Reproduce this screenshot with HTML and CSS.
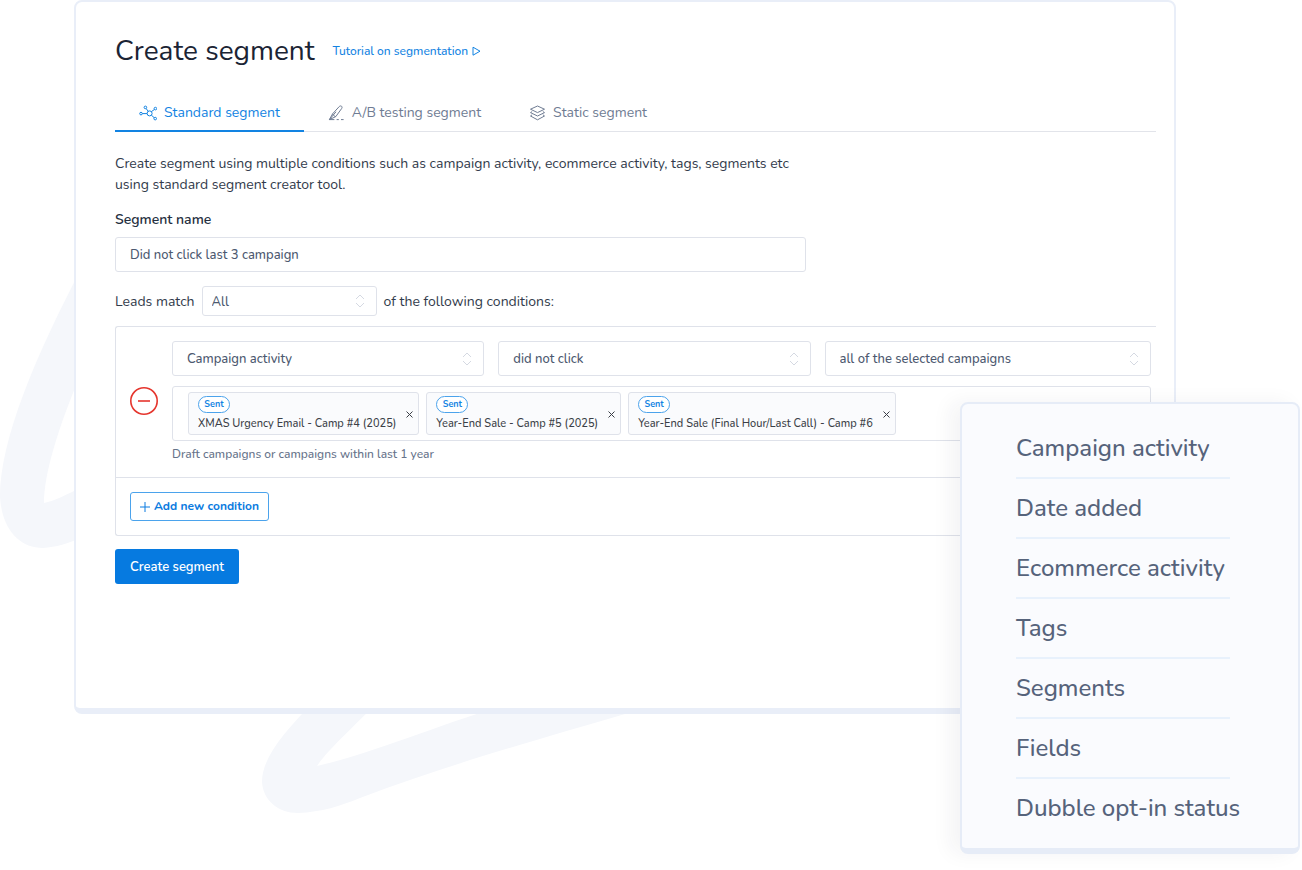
FILE: index.html
```html
<!DOCTYPE html>
<html lang="en">
  <head>
    <meta charset="UTF-8" />
    <meta name="viewport" content="width=device-width, initial-scale=1.0" />
    <title>Create segment</title>
    <link rel="stylesheet" href="styles.css" />
  </head>
  <body>
    <div class="stage">
      <!-- Background ribbon -->
      <svg class="ribbon" width="640" height="820" viewBox="0 0 640 820" aria-hidden="true">
        <path d="M82 267C35 357 0 440 0 497C2 530 20 548 43 548C56 547 68 544 82 537V487C68 494 54 501 44 503C44 475 57 430 82 371Z" />
        <path d="M312 703C285 732 262 757 262 782C263 800 278 813 298 813C322 812 340 806 360 798C450 764 530 742 655 705H505C430 728 370 754 317 766C328 750 347 733 375 705Z" />
      </svg>

      <main class="panel">
        <header class="title-row">
          <h1>Create segment</h1>
          <a href="#" class="tutorial">
            Tutorial on segmentation
            <svg width="9" height="10" viewBox="0 0 9 10"><path d="M1 1.2 8 5.2 1 9.2Z" /></svg>
          </a>
        </header>

        <nav class="tabs">
          <a href="#" class="tab active">
            <svg width="18" height="16" viewBox="0 0 18 16">
              <circle cx="10.6" cy="8.4" r="2.5" />
              <circle cx="6.4" cy="2.4" r="1.3" />
              <circle cx="16.4" cy="3.6" r="1.3" />
              <circle cx="2" cy="8.6" r="1.3" />
              <circle cx="16.2" cy="13.6" r="1.3" />
              <path d="M7.1 3.5 9.2 6.3M15.4 4.5 12.4 6.6M3.3 8.6H8.1M12.4 10.2 15.2 12.7" />
            </svg>
            Standard segment
          </a>
          <a href="#" class="tab">
            <svg width="17" height="16" viewBox="0 0 17 16">
              <path d="M4.6 8.8 11.2 1.6C11.9.8 13 .7 13.6 1.3 14.2 1.8 14.2 2.8 13.6 3.6L7.8 11.6 1.4 14.6ZM4.6 8.8C5.4 10.4 6.4 11.4 7.8 11.6M1.4 14.6 8 6.8M1.4 14.6H6.4M8.6 14.6H10.8M13 14.6H15.6" />
            </svg>
            A/B testing segment
          </a>
          <a href="#" class="tab">
            <svg width="17" height="16" viewBox="0 0 17 16">
              <path d="M8.5 1 15.5 4.2 8.5 7.6 1.5 4.2ZM3.1 6.6 1.5 7.6 8.5 11 15.5 7.6 13.9 6.6M3.1 9.8 1.5 11 8.5 14.8 15.5 11 13.9 9.8" />
            </svg>
            Static segment
          </a>
        </nav>

        <form class="segment-form">
          <p class="description">
            Create segment using multiple conditions such as campaign activity, ecommerce activity, tags, segments etc
            using standard segment creator tool.
          </p>

          <label class="name-label" for="segment-name">Segment name</label>
          <input type="text" id="segment-name" class="name-input" value="Did not click last 3 campaign" />

          <div class="match-row">
            <label for="match">Leads match</label>
            <div class="select small">
              <select id="match"><option>All</option><option>Any</option></select>
              <svg width="10" height="14" viewBox="0 0 10 14"><path d="M1 5 5 1 9 5M1 9 5 13 9 9" /></svg>
            </div>
            <span>of the following conditions:</span>
          </div>

          <div class="conditions">
            <div class="condition">
              <button type="button" class="remove" aria-label="Remove condition">
                <svg width="28" height="28" viewBox="0 0 28 28"><circle cx="14" cy="14" r="13.2" /><path d="M8 14H20" /></svg>
              </button>
              <div class="fields">
                <div class="selects">
                  <div class="select">
                    <select aria-label="Condition type"><option>Campaign activity</option></select>
                    <svg width="10" height="14" viewBox="0 0 10 14"><path d="M1 5 5 1 9 5M1 9 5 13 9 9" /></svg>
                  </div>
                  <div class="select">
                    <select aria-label="Activity"><option>did not click</option></select>
                    <svg width="10" height="14" viewBox="0 0 10 14"><path d="M1 5 5 1 9 5M1 9 5 13 9 9" /></svg>
                  </div>
                  <div class="select">
                    <select aria-label="Campaigns"><option>all of the selected campaigns</option></select>
                    <svg width="10" height="14" viewBox="0 0 10 14"><path d="M1 5 5 1 9 5M1 9 5 13 9 9" /></svg>
                  </div>
                </div>

                <div class="tags">
                  <div class="tag">
                    <div><span class="status">Sent</span><div class="tag-name">XMAS Urgency Email - Camp #4 (2025)</div></div>
                    <button type="button" aria-label="Remove campaign"><svg width="7" height="7" viewBox="0 0 7 7"><path d="M.5.5 6.5 6.5M6.5.5.5 6.5" /></svg></button>
                  </div>
                  <div class="tag">
                    <div><span class="status">Sent</span><div class="tag-name">Year-End Sale - Camp #5 (2025)</div></div>
                    <button type="button" aria-label="Remove campaign"><svg width="7" height="7" viewBox="0 0 7 7"><path d="M.5.5 6.5 6.5M6.5.5.5 6.5" /></svg></button>
                  </div>
                  <div class="tag">
                    <div><span class="status">Sent</span><div class="tag-name">Year-End Sale (Final Hour/Last Call) - Camp #6</div></div>
                    <button type="button" aria-label="Remove campaign"><svg width="7" height="7" viewBox="0 0 7 7"><path d="M.5.5 6.5 6.5M6.5.5.5 6.5" /></svg></button>
                  </div>
                </div>
                <p class="hint">Draft campaigns or campaigns within last 1 year</p>
              </div>
            </div>

            <div class="add-row">
              <button type="button" class="btn-outline">
                <svg width="10" height="10" viewBox="0 0 10 10"><path d="M5 0V10M0 5H10" /></svg>
                Add new condition
              </button>
            </div>
          </div>

          <button type="submit" class="btn">Create segment</button>
        </form>
      </main>

      <!-- Condition type menu, floats over the panel -->
      <ul class="menu">
        <li>Campaign activity</li>
        <li>Date added</li>
        <li>Ecommerce activity</li>
        <li>Tags</li>
        <li>Segments</li>
        <li>Fields</li>
        <li>Dubble opt-in status</li>
      </ul>
    </div>
  </body>
</html>
```
FILE: styles.css
```css
*,
*::after,
*::before {
  margin: 0;
  padding: 0;
  box-sizing: border-box;
}

body {
  font-family: Nunito, Lato, "Open Sans", sans-serif;
  font-size: 14px;
  line-height: 21px;
  color: #323b4b;
  background: #fff;
}

button,
input,
select {
  font: inherit;
  color: inherit;
}

button {
  cursor: pointer;
}

a {
  text-decoration: none;
}

svg {
  display: block;
  flex: none;
  fill: none;
  stroke: currentColor;
}

.stage {
  position: relative;
  min-height: 870px;
  padding: 0 126px 0 74px;
}

.ribbon {
  position: absolute;
  top: 0;
  left: 0;
  fill: #f5f7fb;
  stroke: none;
}

.panel {
  position: relative;
  min-height: 714px;
  padding: 31px 18px 40px 39px;
  background: #fff;
  border: 2px solid #e9eef8;
  border-bottom-width: 6px;
  border-radius: 8px;
}

.title-row {
  display: flex;
  align-items: center;
  gap: 18px;
}

h1 {
  font-size: 28px;
  font-weight: 400;
  line-height: 36px;
  color: #1b2434;
}

.tutorial {
  display: flex;
  align-items: center;
  gap: 4px;
  font-size: 12px;
  font-weight: 500;
  color: #1283e2;
}

.tabs {
  display: flex;
  margin-top: 23px;
  border-bottom: 1px solid #e2e4ea;
}

.tab {
  display: flex;
  align-items: center;
  gap: 7px;
  margin-bottom: -1px;
  padding: 10px 24px 7px;
  border-bottom: 2px solid transparent;
  color: #6f7c93;
}

.tab.active {
  color: #1283e2;
  border-color: #1283e2;
}

.description {
  max-width: 691px;
  margin-top: 21px;
}

.name-label {
  display: block;
  margin-top: 14px;
  font-weight: 600;
  color: #252f40;
}

.name-input {
  display: block;
  width: 100%;
  max-width: 691px;
  height: 35px;
  margin-top: 7px;
  padding: 1px 14px 0;
  font-size: 13px;
  font-weight: 500;
  color: #4d5970;
  border: 1px solid #dfe2ea;
  border-radius: 3px;
}

.match-row {
  display: flex;
  align-items: center;
  gap: 7px;
  margin-top: 14px;
}

.select {
  position: relative;
  height: 35px;
}

.select select {
  width: 100%;
  height: 100%;
  padding: 2px 14px 0;
  font-size: 13px;
  font-weight: 500;
  color: #4d5970;
  appearance: none;
  background: #fff;
  border: 1px solid #dfe2ea;
  border-radius: 3px;
}

.select svg {
  position: absolute;
  top: 50%;
  right: 12px;
  margin-top: -7px;
  color: #d5d9e2;
  pointer-events: none;
}

.select.small {
  width: 175px;
  height: 30px;
}

.select.small select {
  padding: 2px 9px 0;
}

.conditions {
  margin-top: 10px;
  border: 1px solid #dfe2ea;
  border-right: 0;
  border-radius: 3px 0 0 3px;
}

.condition {
  display: flex;
  align-items: center;
  gap: 14px;
  padding: 14px 5px 12px 14px;
  border-bottom: 1px solid #dfe2ea;
}

.remove {
  margin-bottom: 4px;
  background: none;
  border: 0;
  color: #e5352d;
}

.remove svg {
  stroke-width: 1.6;
}

.fields {
  flex: 1;
}

.selects {
  display: grid;
  grid-template-columns: 22fr 22fr 23fr;
  gap: 14px;
}

.tags {
  display: flex;
  gap: 7px;
  margin-top: 10px;
  padding: 5px 15px;
  border: 1px solid #dfe2ea;
  border-radius: 3px;
}

.tag {
  display: flex;
  align-items: center;
  gap: 10px;
  padding: 3px 5px 2px 9px;
  font-size: 11px;
  font-weight: 500;
  color: #3b3f47;
  background: #fafbfd;
  border: 1px solid #dfe2ea;
  border-radius: 3px;
}

.status {
  display: block;
  width: 32px;
  height: 17px;
  font-size: 9px;
  font-weight: 700;
  line-height: 14px;
  text-align: center;
  color: #1283e2;
  background: #fff;
  border: 1px solid #4ba3ec;
  border-radius: 9px;
}

.tag-name {
  margin-top: 3px;
  line-height: 16px;
}

.tag button {
  background: none;
  border: 0;
}

.hint {
  margin-top: 3px;
  font-size: 12px;
  font-weight: 500;
  color: #66738a;
}

.add-row {
  padding: 14px;
}

.btn-outline {
  display: flex;
  align-items: center;
  gap: 4px;
  height: 29px;
  padding: 0 9px;
  font-size: 12px;
  font-weight: 700;
  color: #0a7be0;
  background: #fff;
  border: 1px solid #4ba3ec;
  border-radius: 3px;
}

.btn {
  height: 35px;
  margin-top: 13px;
  padding: 1px 15px 0;
  font-size: 13px;
  font-weight: 600;
  color: #fff;
  background: #067ae0;
  border: 0;
  border-radius: 3px;
}

.menu {
  position: absolute;
  top: 402px;
  right: 2px;
  width: 340px;
  padding: 15px 54px 11px;
  list-style: none;
  font-size: 24px;
  font-weight: 500;
  color: #56637b;
  background: #fafbfe;
  border: 2px solid #e6ecf7;
  border-bottom-width: 6px;
  border-radius: 8px;
  box-shadow: -10px 0 20px rgba(30, 40, 60, 0.05);
}

.menu li {
  width: 214px;
  line-height: 58px;
  white-space: nowrap;
  border-bottom: 2px solid #e8f1fc;
}

.menu li:last-child {
  border-bottom: 0;
}
```
